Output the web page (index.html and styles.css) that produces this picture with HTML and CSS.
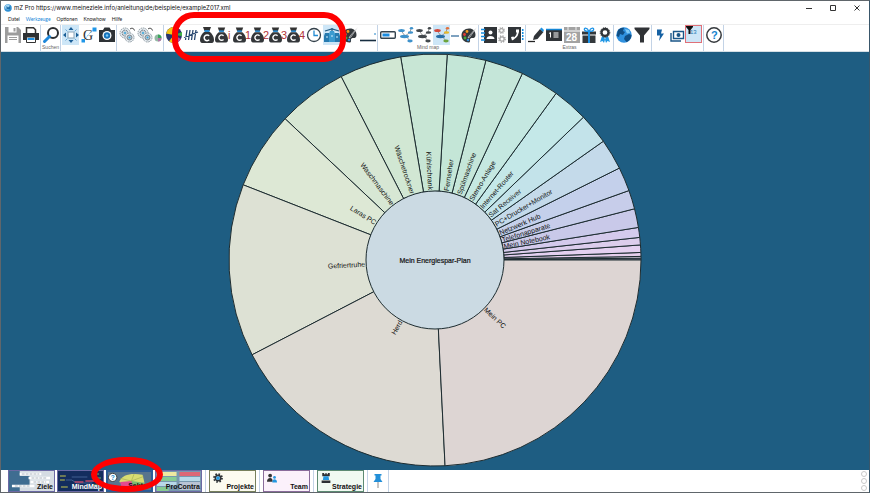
FILE: index.html
```html
<!DOCTYPE html>
<html lang="de">
<head>
  <meta charset="UTF-8">
  <title>mZ Pro</title>
  <meta name="viewport" content="width=device-width, initial-scale=1.0">
  <link rel="stylesheet" href="styles.css">
</head>
<body>

<!-- Shared icon shapes -->
<svg class="defs" aria-hidden="true">
  <symbol id="bag" viewBox="0 0 14 16">
    <path d="M3 0h8L9.500 4h-5z" fill="#333"/>
    <path d="M4.500 3h5v2h-5z" fill="#2a8bd0"/>
    <path d="M4 5h6c2.500 2 4 5 4 8 0 2-1 3-2 3H2c-1 0-2-1-2-3 0-3 1.500-6 4-8z" fill="#333639"/>
    <path d="M9.200 8.800a2.900 2.900 0 1 0 0 4" fill="none" stroke="#fff" stroke-width="1.500"/>
  </symbol>
  <symbol id="palette" viewBox="0 0 16 16">
    <path d="M8 1.500C3.500 1.500.5 4.500.5 8.500s3 7 7 7c2 0 1.500-2 1.500-3s1-1.500 2.500-1.500 3-.5 3-3c0-4-2.500-6.500-6.500-6.500z" fill="#33383c"/>
    <circle cx="6" cy="4.500" r="1.400" fill="#f59a20"/>
    <circle cx="3.500" cy="7.500" r="1.400" fill="#e23b32"/>
    <circle cx="4" cy="11" r="1.400" fill="#47a53c"/>
    <circle cx="7" cy="13" r="1.300" fill="#2e8fdb"/>
    <path d="M15.500.5L8 9l-1 2 2-1z" fill="#4a4f53" stroke="#fff" stroke-width=".5"/>
  </symbol>
  <symbol id="gear" viewBox="0 0 16 16">
    <circle cx="8" cy="8" r="6.300" fill="none" stroke="currentColor" stroke-width="3" stroke-dasharray="2.500 2.450"/>
    <circle cx="8" cy="8" r="4.300" fill="none" stroke="currentColor" stroke-width="2.600"/>
  </symbol>
  <symbol id="gears" viewBox="0 0 16 16">
    <circle cx="6" cy="6" r="5" fill="#e8eef2" stroke="#8b979f" stroke-dasharray="1.500 .8"/>
    <circle cx="6" cy="6" r="3" fill="#c5d0d8" stroke="#59656e" stroke-width=".8" stroke-dasharray="2 1"/>
    <circle cx="6" cy="6" r="1" fill="#35aae2"/>
    <circle cx="10.500" cy="10.500" r="4.500" fill="#e8eef2" stroke="#8b979f" stroke-dasharray="1.500 .8"/>
    <circle cx="10.500" cy="10.500" r="2.500" fill="#b9c6cf" stroke="#66737d" stroke-width=".8"/>
    <circle cx="10.500" cy="10.500" r="1" fill="#35aae2"/>
    <path d="M11 2c2-1.500 4-.5 4.500 1.500" fill="none" stroke="#333"/>
  </symbol>
  <symbol id="gift" viewBox="0 0 14 16">
    <path d="M0 4.500h6v3H0zM8 4.500h6v3H8zM.5 8.500H6V16H.5zM8 8.500h5.500V16H8z" fill="#33383c"/>
    <path d="M6 4.500h2V16H6z" fill="#1e93e6"/>
    <path d="M7 4.500C5 0 1.500.5 2.500 3c.5 1.500 3 1.500 4.500 1.500C9 0 12.500.5 11.500 3c-.5 1.500-3 1.500-4.500 1.500z" fill="none" stroke="#1e93e6" stroke-width="1.300"/>
  </symbol>
  <symbol id="map" viewBox="0 0 16 16">
    <path d="M3 3.500l4 5.500 5-3.500M8 9l4 5M13 1.500l-1 4" fill="none" stroke="#777" stroke-width=".7"/>
    <ellipse class="n1" cx="3.500" cy="3.500" rx="3.300" ry="1.500"/>
    <ellipse class="n2" cx="13.500" cy="1.300" rx="1.700" ry="1.200"/>
    <ellipse class="n3" cx="12.500" cy="5.500" rx="2.700" ry="1.300"/>
    <ellipse class="n4" cx="6.500" cy="9.500" rx="4.500" ry="1.700"/>
    <ellipse class="n5" cx="12" cy="14" rx="2.700" ry="1.400"/>
  </symbol>
</svg>

<header>
  <div class="titlebar">
    <svg class="logo" viewBox="0 0 16 16"><circle cx="8" cy="8" r="7.500" fill="#2f8fd3"/><circle cx="7" cy="6" r="5" fill="#9fd3f2"/><path d="M5 4l3 3 4-3v6H5z" fill="#1c6da9"/></svg>
    <span class="title">mZ Pro https://www.meineziele.info/anleitung/de/beispiele/exampleZ017.xml</span>
    <button class="win" aria-label="Minimieren"><svg viewBox="0 0 6 6"><path d="M0 3.500h6"/></svg></button>
    <button class="win" aria-label="Maximieren"><svg viewBox="0 0 6 6"><path d="M.5.5h5v5h-5z"/></svg></button>
    <button class="win" aria-label="Schließen"><svg viewBox="0 0 6 6"><path d="M.5.5l5 5M5.500.5l-5 5"/></svg></button>
  </div>

  <nav class="menu">
    <button>Datei</button>
    <button class="current">Werkzeuge</button>
    <button>Optionen</button>
    <button>Knowhow</button>
    <button>Hilfe</button>
  </nav>

  <div class="ribbon">
    <div class="group">
      <div class="icons">
        <button aria-label="Speichern"><svg viewBox="0 0 16 16"><path d="M0 0h13l3 3v13H0z" fill="#9c9c9c"/><path d="M3.500 0h8v5.500h-8z" fill="#fff"/><path d="M8.500 1h2v3.500h-2z" fill="#9c9c9c"/><path d="M2.500 8.500h11V16h-11z" fill="#fff"/><path d="M4 10.500h8M4 12.500h8" stroke="#9c9c9c"/></svg></button>
        <button aria-label="Drucken"><svg viewBox="0 0 16 16"><path d="M3.500 6V.8h7l2 2V6" fill="#fff" stroke="#333" stroke-width="1.500"/><path d="M0 6h16v7H0z" fill="#2d3033"/><path d="M3.500 10h9v5.500h-9z" fill="#fff" stroke="#333"/><path d="M4.500 11h7v2h-7z" fill="#1d91e5"/></svg></button>
      </div>
    </div>

    <div class="group">
      <div class="icons">
        <button aria-label="Suchen"><svg viewBox="0 0 16 16"><circle cx="10" cy="6" r="5" fill="#fff" stroke="#2b2e31" stroke-width="2"/><path d="M6.500 9.500L1.500 14.500" stroke="#1e87da" stroke-width="3" stroke-linecap="round"/></svg></button>
      </div>
      <span class="caption">Suchen</span>
    </div>

    <div class="group">
      <div class="icons">
        <button class="active" aria-label="Verschieben"><svg viewBox="0 0 16 16"><path d="M5 5h6v6H5z" fill="#fff" stroke="#8aa5b8"/><path d="M8 0l2.500 3h-5zM8 16l2.500-3h-5zM0 8l3-2.500v5zM16 8l-3-2.500v5z" fill="#1b5f97"/><path d="M2.500 2.500l2 2M13.500 2.500l-2 2M2.500 13.500l2-2M13.500 13.500l-2-2" stroke="#6aa9d4"/></svg></button>
        <button aria-label="Gruppe"><svg viewBox="0 0 16 16"><path d="M11.500.5h4v4h-4zM.5 12h3.500v3.500H.5z" fill="#2197e8"/><path d="M11 3.500L4 12" stroke="#2197e8" stroke-dasharray="1 1"/><text class="serif" x="2" y="13">G</text></svg></button>
        <button aria-label="Foto"><svg viewBox="0 0 16 16"><path d="M0 3h4l1.500-2.500h5L12 3h4v12H0z" fill="#2e3236"/><circle cx="8" cy="8.500" r="4.500" fill="#fff"/><circle cx="8" cy="8.500" r="3.200" fill="#1875bd"/><circle cx="8" cy="8.500" r="1.200" fill="#7cc8f6"/></svg></button>
      </div>
    </div>

    <div class="group">
      <div class="icons">
        <button aria-label="Ablauf"><svg><use href="#gears"/></svg></button>
        <button aria-label="Ablauf umkehren"><svg><use href="#gears"/></svg></button>
        <button class="mini" aria-label="Farbkreis"><svg viewBox="0 0 8 16"><circle cx="4" cy="11" r="3.500" fill="#93b9a4"/><path d="M4 11V7.500A3.500 3.500 0 0 1 7.500 11z" fill="#39a65a"/><path d="M4 11h3.500A3.500 3.500 0 0 1 4 14.500z" fill="#b174a8"/></svg></button>
      </div>
    </div>

    <div class="group">
      <div class="icons">
        <button aria-label="Farben"><svg viewBox="0 0 16 16"><circle cx="8" cy="8" r="8" fill="#27356e"/><path d="M8 8L0 6.500A8 8 0 0 1 11 .6zM8 8l-5 6.200A8 8 0 0 0 9 16z" fill="#f3c515"/><path d="M8 8l8-3v4z" fill="#3fb245"/><path d="M8 8l7 4a8 8 0 0 1-6 4z" fill="#b94c9d"/></svg></button>
        <button class="narrow" aria-label="Strichliste"><svg viewBox="0 0 14 16"><path d="M3 3L1.500 13M6 3L4.500 13M9 3L7.500 13M12 3l-1.500 10M0 10.500L14 5" stroke="#27466f" stroke-width="1.300"/></svg></button>
        <button class="narrow" aria-label="Kosten"><svg><use href="#bag"/></svg></button>
        <button aria-label="Kosten Info"><svg viewBox="0 0 16 16"><use href="#bag" x="-1" width="13" height="16"/><text class="num" x="12" y="12">i</text></svg></button>
        <button aria-label="Kosten 1"><svg viewBox="0 0 16 16"><use href="#bag" x="-1" width="13" height="16"/><text class="num" x="11" y="12">1</text></svg></button>
        <button aria-label="Kosten 2"><svg viewBox="0 0 16 16"><use href="#bag" x="-1" width="13" height="16"/><text class="num" x="11" y="12">2</text></svg></button>
        <button aria-label="Kosten 3"><svg viewBox="0 0 16 16"><use href="#bag" x="-1" width="13" height="16"/><text class="num" x="11" y="12">3</text></svg></button>
        <button aria-label="Kosten 4"><svg viewBox="0 0 16 16"><use href="#bag" x="-1" width="13" height="16"/><text class="num" x="11" y="12">4</text></svg></button>
        <button aria-label="Zeit"><svg viewBox="0 0 16 16"><circle cx="8" cy="8" r="6.500" fill="#fff" stroke="#34414b" stroke-width="1.300"/><path d="M8 3.500V8.500h4" fill="none" stroke="#238bd3" stroke-width="1.300"/></svg></button>
        <button class="active" aria-label="Waage"><svg viewBox="0 0 16 16"><path d="M8 1v14M1 4l7-2 7 2" stroke="#245d84" stroke-width="1.300" fill="none"/><path d="M1 6h4l1 3v6H0V9zM11 6h4l1 3v6h-6V9z" fill="#267aaf"/><path d="M6 4h4l1 3v8H5V7z" fill="#3b9bd0"/><path d="M2 10h2M7 9h2M12 10h2" stroke="#d3efff"/></svg></button>
        <button aria-label="Farbe"><svg><use href="#palette"/></svg></button>
        <button aria-label="Linie"><svg viewBox="0 0 16 16"><path d="M0 13.500h16" stroke="#172d40" stroke-width="1.600"/><path d="M15 6v2" stroke="#1e83c7"/></svg></button>
      </div>
    </div>

    <div class="group">
      <div class="icons">
        <button aria-label="Fortschritt"><svg viewBox="0 0 16 16"><rect x=".7" y="4.700" width="14.600" height="6.600" rx="1" fill="#fff" stroke="#34434e" stroke-width="1.400"/><path d="M2.500 6.500h7v3h-7z" fill="#198be0"/></svg></button>
        <button aria-label="Karte blau"><svg class="blue"><use href="#map"/></svg></button>
        <button aria-label="Karte grau"><svg class="dark"><use href="#map"/></svg></button>
        <button class="active" aria-label="Karte bunt"><svg class="multi"><use href="#map"/></svg></button>
        <button class="mini" aria-label="Verbindung"><svg viewBox="0 0 8 16"><path d="M0 9h8" stroke="#5383ab" stroke-width="1.500"/></svg></button>
        <button aria-label="Kartenfarben"><svg><use href="#palette"/></svg></button>
      </div>
      <span class="caption">Mind map</span>
    </div>

    <div class="group">
      <div class="icons">
        <button aria-label="Kontakte"><svg viewBox="0 0 16 16"><path d="M3 0h13v16H3z" fill="#303438"/><path d="M0 2.500h4M0 6h4M0 9.500h4M0 13h4" stroke="#178fe1" stroke-width="1.600"/><circle cx="9.500" cy="5.500" r="2" fill="#fff"/><path d="M5.500 12c0-4 8-4 8 0z" fill="#fff"/></svg></button>
        <button class="mini" aria-label="Einstellungen"><svg class="grey" viewBox="0 0 8 16"><use href="#gear" width="7" height="7"/><use href="#gear" y="8" width="8" height="8"/></svg></button>
        <button aria-label="Telefon"><svg viewBox="0 0 16 16"><path d="M0 0h13v16H0z" fill="#303438"/><path d="M14 3h1.500M14 6h1.500M14 9h1.500M14 12h1.500" stroke="#178fe1" stroke-width="2"/><path d="M9.500 3c1 4-1 8-5.500 9" fill="none" stroke="#fff" stroke-width="1.800"/><path d="M8 2.500h3v3H8zM3 10l2.500-.5 1 2.500L4 13.500z" fill="#fff"/></svg></button>
      </div>
    </div>

    <div class="group">
      <div class="icons">
        <button aria-label="Stift"><svg viewBox="0 0 16 16"><path d="M0 14.500h7" stroke="#222" stroke-width="1.300"/><path d="M5 13l1-4 6-7 3.500 3-6 7z" fill="#303438"/><path d="M12 2l1.500-1.500L16 3l-1 2z" fill="#1d92e4"/></svg></button>
        <button aria-label="Karteikarte"><svg viewBox="0 0 16 16"><path d="M0 2h16v12H0z" fill="#303438"/><path d="M0 2.500h16" stroke="#1586d5" stroke-width="1.500"/><path d="M4.500 5.500v5M3 6.500l1.500-1M7.500 6h5M7.500 8h5M7.500 10h5" stroke="#fff"/></svg></button>
        <button aria-label="Kalender"><svg viewBox="0 0 16 16"><path d="M0 0h16v16H0z" fill="#a3a3a3"/><path d="M0 4h16" stroke="#fff"/><path d="M4 0v3M12 0v3" stroke="#ddd" stroke-width="1.300"/><text class="day" x="2" y="14">28</text></svg></button>
        <button class="narrow" aria-label="Geschenk"><svg><use href="#gift"/></svg></button>
        <button class="narrow" aria-label="Auszeichnung"><svg viewBox="0 0 14 16"><path d="M4 9l-2 6 2.500-1L6 16l1.500-5zM10 9l2 6-2.500-1L8 16l-1.500-5z" fill="#2097e4"/><circle cx="7" cy="5.500" r="3.500" fill="#fff" stroke="#303438" stroke-width="2.300"/><circle cx="7" cy="5.500" r="4.800" fill="none" stroke="#303438" stroke-dasharray="1.200 1"/></svg></button>
      </div>
      <span class="caption">Extras</span>
    </div>

    <div class="group">
      <div class="icons">
        <button aria-label="Internet"><svg viewBox="0 0 16 16"><circle cx="8" cy="8" r="7.700" fill="#2f91df"/><path d="M2 3c2-2 5-2.500 6-2l-1 3 2 1-2 3-3-1-1 3-2.500-1zM9 9l4-2 2.500 1c0 4-3 6.500-5 7L8 12z" fill="#104e84"/><path d="M9 2l4 1 1 3-3 .5z" fill="#80cbf7"/></svg></button>
        <button aria-label="Filter"><svg viewBox="0 0 16 16"><path d="M.5.5h15v1.500L10 8.500v7H6v-7L.5 2z" fill="#303336"/></svg></button>
      </div>
    </div>

    <div class="group">
      <div class="icons">
        <button class="narrow" aria-label="Blitz"><svg viewBox="0 0 14 16"><path d="M3 2.500h5L7 6.500h3L5 14l1-5.500H3z" fill="#1561a3"/></svg></button>
        <button class="narrow" aria-label="Geld"><svg viewBox="0 0 14 16"><path d="M3.500 4.500h10v7h-10z" fill="#fff" stroke="#1a5688" stroke-width="1.400"/><circle cx="8.500" cy="8" r="2" fill="#1a5688"/><path d="M1 6v8h10" fill="none" stroke="#1a5688" stroke-width="1.400"/></svg></button>
        <button class="active framed" aria-label="Filter 13"><svg viewBox="0 0 16 16"><path d="M0 0h7v1L4.500 4v4h-2V4L0 1z" fill="#111"/><text class="small" x="4" y="8">13</text></svg></button>
      </div>
    </div>

    <div class="group">
      <div class="icons">
        <button aria-label="Hilfe"><svg viewBox="0 0 16 16"><circle cx="8" cy="8" r="7.200" fill="#fff" stroke="#35393d" stroke-width="1.500"/><text class="help" x="5" y="12">?</text></svg></button>
      </div>
    </div>
  </div>
</header>

<main>
  <svg id="sunburst" viewBox="-209 -208 418 418" role="img" aria-label="Mein Energiespar-Plan"></svg>
</main>

<footer>
  <div class="views">
    <button class="view">
      <svg class="thumb" viewBox="0 0 46 20" preserveAspectRatio="none"><path d="M0 0h46v20H0z" fill="#d5dce3"/><path d="M0 0h11v20H0zM11 5h10v9H11z" fill="#3f6d91"/><path d="M11 3h22M20 7h22M22 11h19M3 15h23" stroke="#fff" stroke-width="2.500"/><path d="M13 3h18M23 7h15M25 11h13M6 15h16" stroke="#8795a4" stroke-width=".7" stroke-dasharray="3 1"/></svg>
      <span>Ziele</span>
    </button>
    <button class="view light">
      <svg class="thumb" viewBox="0 0 46 20" preserveAspectRatio="none"><path d="M0 0h46v20H0z" fill="#132d5e"/><path d="M2 5h6M2 9h5M3 16h7" stroke="#c7c84e"/><path d="M8 9h6l5 3h16M14 6h16" fill="none" stroke="#5f83b4" stroke-width=".6"/><path d="M17 11h9M28 10h9" stroke="#bc486c" stroke-width="1.300"/><path d="M35 3h7M38 7h6M36 14h7" stroke="#79b65f"/></svg>
      <span>MindMap</span>
    </button>
    <button class="view selected">
      <svg class="thumb" viewBox="0 0 46 20" preserveAspectRatio="none"><path d="M0 0h46v20H0z" fill="#58748d"/><path d="M12 11C15 3 24 1 37 3l2 9-18 3z" fill="#d9dc72"/><path d="M13 11l12-1 7 10H15z" fill="#e24c90"/><path d="M25 10l14 2v8H28z" fill="#7dba70"/><path d="M13 7l12 3 3-8M25 10l13-5" fill="none" stroke="#98a54b" stroke-width=".6"/><circle cx="5" cy="6" r="4.500" fill="#fff" stroke="#333"/><text class="q" x="3" y="9">?</text></svg>
      <span>Sektor</span>
    </button>
    <button class="view">
      <svg class="thumb" viewBox="0 0 46 20" preserveAspectRatio="none"><path d="M0 0h46v20H0z" fill="#7898af"/><path d="M1 1h20v4H1z" fill="#efe8a0"/><path d="M24 1h21v4H24z" fill="#dc6775"/><path d="M1 6h20v4H1zM1 16h12v4H1z" fill="#87cb93"/><path d="M24 6h21v4H24zM1 11h20v4H1z" fill="#b8d9e8"/><path d="M24 11h21v8H24z" fill="#b9c3d4"/></svg>
      <span>ProContra</span>
    </button>
  </div>
  <div class="views">
    <button class="view projects">
      <svg class="glyph" viewBox="0 0 16 16"><use href="#gear" width="16" height="16"/><circle cx="8" cy="8" r="3" fill="#269be2"/></svg>
      <span>Projekte</span>
    </button>
  </div>
  <div class="views">
    <button class="view team">
      <svg class="glyph" viewBox="0 0 16 16"><circle cx="5" cy="4" r="3" fill="#333"/><path d="M0 14c0-4 2-6 5-6s4 2 4 6z" fill="#333"/><circle cx="12" cy="7" r="2.200" fill="#2397e0"/><path d="M8.500 15c0-3.500 1.500-5 3.500-5s4 1.500 4 5z" fill="#2397e0"/></svg>
      <span>Team</span>
    </button>
  </div>
  <div class="views">
    <button class="view strategy">
      <svg class="glyph" viewBox="0 0 16 16"><path d="M2 0h3v2h2V0h2v2h2V0h3v5H2z" fill="#2c3033"/><path d="M4 5h8l1 6H3z" fill="#2397e0"/><path d="M1 12h14v4H1z" fill="#2c3033"/></svg>
      <span>Strategie</span>
    </button>
  </div>
  <div class="views">
    <button class="pin" aria-label="Anheften"><svg viewBox="0 0 10 16"><path d="M1.500 1h7v1.500h-1V6L9.500 9h-9l2-3V2.500h-1z" fill="#238fd8"/><path d="M5 9v6" stroke="#888"/></svg></button>
  </div>
  <div class="dots">
    <button aria-label="Ansicht 1"></button>
    <button aria-label="Ansicht 2"></button>
    <button aria-label="Ansicht 3"></button>
  </div>
</footer>

<!-- Red markers laid over the toolbar and the sector tab -->
<div class="marker marker-tools"></div>
<div class="marker marker-tab"></div>

<script>
// start = angle in degrees, counter-clockwise from 3 o'clock
const sectors = [
  {start: 0,     name: '',                   color: '#9a8da6'},
  {start: 0.5,   name: '',                   color: '#d9cde0'},
  {start: 1,     name: '',                   color: '#e6cfec'},
  {start: 2.1,   name: '',                   color: '#e4d0f0'},
  {start: 4.2,   name: '',                   color: '#dccdec'},
  {start: 6.3,   name: '',                   color: '#d4caec'},
  {start: 9.1,   name: 'Mein Notebook',      color: '#c9c9e9'},
  {start: 14.4,  name: 'Telefonapparate',    color: '#c7cdea'},
  {start: 19.7,  name: 'Netzwerk Hub',       color: '#c4d0eb'},
  {start: 26.5,  name: 'PC+Drucker+Monitor', color: '#c4daea'},
  {start: 35.2,  name: 'Sat Receiver',       color: '#c3e3ea'},
  {start: 43.9,  name: 'Internet-Router',    color: '#c4e8e8'},
  {start: 54,    name: 'Stereo-Anlage',      color: '#c5e8e1'},
  {start: 64.9,  name: 'Spülmaschine',       color: '#c5e6d9'},
  {start: 75.7,  name: 'Fernseher',          color: '#c4e6d7'},
  {start: 86.6,  name: 'Kühlschrank',        color: '#c8e6d5'},
  {start: 99.6,  name: 'Wäschetrockner',     color: '#d1e7d3'},
  {start: 117.1, name: 'Waschmaschine',      color: '#d7e7d4'},
  {start: 136.7, name: 'Laras PC',           color: '#dde8d5'},
  {start: 158.6, name: 'Gefriertruhe',       color: '#dde1d4'},
  {start: 207.4, name: 'Herd',               color: '#dddad3'},
  {start: 272.8, name: 'Mein PC',            color: '#ddd5d3'}
];
const OUTER = 206;
const INNER = 69;
const svg = document.getElementById('sunburst');

function add(tag, attrs, text) {
  const el = document.createElementNS('http://www.w3.org/2000/svg', tag);
  for (const key in attrs) el.setAttribute(key, attrs[key]);
  if (text) el.textContent = text;
  svg.appendChild(el);
}
function point(r, deg) {
  const a = deg * Math.PI / 180;
  return (r * Math.cos(a)).toFixed(2) + ' ' + (-r * Math.sin(a)).toFixed(2);
}

sectors.forEach((s, i) => {
  const end = i + 1 < sectors.length ? sectors[i + 1].start : 360;
  const big = end - s.start > 180 ? 1 : 0;
  add('path', {
    class: 'sector',
    fill: s.color,
    d: `M${point(INNER, s.start)} L${point(OUTER, s.start)} A${OUTER} ${OUTER} 0 ${big} 0 ${point(OUTER, end)} L${point(INNER, end)} Z`
  });
});

add('circle', {class: 'hub', r: INNER});
add('text', {class: 'hub-label', 'text-anchor': 'middle', y: 3}, 'Mein Energiespar-Plan');

// Labels start at the hub and stay readable on the left half
sectors.forEach((s, i) => {
  if (!s.name) return;
  const end = i + 1 < sectors.length ? sectors[i + 1].start : 360;
  const mid = (s.start + end) / 2;
  const left = mid > 90 && mid < 270;
  add('text', {
    class: 'label',
    x: left ? -INNER - 1 : INNER + 1,
    y: 3,
    'text-anchor': left ? 'end' : 'start',
    transform: `rotate(${left ? 180 - mid : -mid})`
  }, s.name);
});
</script>
</body>
</html>
```

FILE: styles.css
```css
* {
  box-sizing: border-box;
}
body {
  margin: 0;
  height: 100vh;
  display: flex;
  flex-direction: column;
  position: relative;
  overflow: hidden;
  background: #1e5d82;
  border: 1px solid #60666b;
  border-right-color: #39566a;
  font-family: "Liberation Sans", Arial, sans-serif;
}
button {
  margin: 0;
  padding: 0;
  border: 0;
  background: none;
  font-family: inherit;
  color: inherit;
}
svg {
  display: block;
}
.defs {
  position: absolute;
  width: 0;
  height: 0;
}

/* Title and menu */
header {
  background: #fff;
}
.titlebar {
  display: flex;
  align-items: center;
  height: 14px;
  padding-left: 3px;
}
.logo {
  width: 8px;
  height: 8px;
}
.title {
  flex: 1;
  padding-left: 2px;
  font-family: Inter, sans-serif;
  font-size: 6px;
  line-height: 14px;
  color: #111;
}
.win {
  width: 24px;
  height: 14px;
  display: flex;
  align-items: center;
  justify-content: center;
}
.win svg {
  width: 6px;
  height: 6px;
  fill: none;
  stroke: #333;
  stroke-width: 1;
}
.menu {
  display: flex;
  gap: 6px;
  height: 9px;
  padding-left: 7px;
}
.menu button {
  font-family: Lato, sans-serif;
  font-size: 5px;
  line-height: 9px;
  color: #222;
}
.menu .current {
  color: #1686d9;
}

/* Toolbar */
.ribbon {
  display: flex;
  height: 28px;
  padding: 0 2px;
  border-top: 1px solid #eee;
  border-bottom: 1px solid #d5dfe5;
}
.group {
  display: flex;
  flex-direction: column;
  align-items: center;
  padding: 0 1px;
  border-right: 1px solid #c3d3e6;
}
.icons {
  display: flex;
  gap: 1px;
}
.icons button {
  width: 17px;
  height: 20px;
  display: flex;
  align-items: center;
  justify-content: center;
}
.icons .narrow {
  width: 15px;
}
.icons .mini {
  width: 8px;
}
.icons svg {
  width: 16px;
  height: 16px;
  overflow: visible;
}
.icons .narrow svg {
  width: 14px;
}
.icons .mini svg {
  width: 8px;
}
.icons .active {
  background: #cde6f7;
}
.icons .framed {
  height: 18px;
  border: 1px solid #e07078;
}
.caption {
  font-size: 5px;
  line-height: 5px;
  color: #666;
}
.serif {
  font: 14px "Liberation Serif", serif;
  fill: #333;
}
.num {
  font: 11px "Liberation Sans", sans-serif;
  fill: #b0343a;
}
.day {
  font: bold 10px "Liberation Sans", sans-serif;
  fill: #fff;
}
.small {
  font: 6px "Liberation Sans", sans-serif;
  fill: #267bb5;
}
.help {
  font: bold 11px "Liberation Sans", sans-serif;
  fill: #1684ce;
}
.grey {
  color: #a5a5a5;
}
.blue {
  fill: #3f92cb;
}
.dark {
  fill: #42484d;
}
.multi {
  --n1: #d4493b;
  --n2: #e2703b;
  --n3: #e5b82b;
  --n4: #266fa8;
  --n5: #6ca43d;
}
.n1 { fill: var(--n1, inherit); }
.n2 { fill: var(--n2, inherit); }
.n3 { fill: var(--n3, inherit); }
.n4 { fill: var(--n4, inherit); }
.n5 { fill: var(--n5, inherit); }

/* Chart */
main {
  flex: 1;
  min-height: 0;
  display: flex;
  justify-content: center;
}
#sunburst {
  width: 100%;
  height: 100%;
}
.sector {
  stroke: #1d2c30;
  stroke-width: 1;
}
.hub {
  fill: #cbdae3;
  stroke: #1d2c30;
}
.label, .hub-label {
  font-size: 7px;
  fill: #111;
}
.hub-label {
  stroke: #111;
  stroke-width: 0.2;
}

/* View tabs */
footer {
  display: flex;
  height: 22px;
  padding-left: 4px;
  background: #fff;
}
.views {
  display: flex;
  gap: 2px;
  padding: 0 3px;
  border-right: 1px solid #c3d3e6;
}
.view {
  position: relative;
  width: 47px;
  height: 22px;
  display: flex;
  align-items: flex-end;
  justify-content: flex-end;
  border: 1px solid #6b69a4;
  padding: 0 1px;
  color: #111;
}
.view span {
  position: relative;
  font-size: 7px;
  font-weight: bold;
  line-height: 8px;
}
.view.light {
  color: #fff;
}
.view.selected {
  border: 2px solid #2c5c96;
}
.thumb {
  position: absolute;
  top: 0;
  left: 0;
  width: 100%;
  height: 100%;
}
.glyph {
  position: absolute;
  top: 2px;
  left: 3px;
  width: 10px;
  height: 10px;
  color: #303438;
}
.projects {
  background: #fcfbf0;
  border-color: #77805c;
}
.team {
  background: #fbf1fb;
  border-color: #8a6c9b;
}
.strategy {
  background: #f1faf2;
  border-color: #5d8b73;
}
.q {
  font-size: 7px;
  font-weight: bold;
  fill: #1785ce;
}
.pin {
  width: 14px;
  display: flex;
  align-items: center;
  justify-content: center;
}
.pin svg {
  width: 10px;
  height: 16px;
}
.dots {
  margin-left: auto;
  padding: 1px 2px;
  display: flex;
  flex-direction: column;
  justify-content: space-between;
}
.dots button {
  width: 6px;
  height: 6px;
  border: 1px solid #c9c9c9;
  border-radius: 50%;
}

/* Markers */
.marker {
  position: absolute;
  border: 6px solid #fe0000;
  pointer-events: none;
}
.marker-tools {
  left: 171px;
  top: 11px;
  width: 174px;
  height: 50px;
  border-radius: 22px;
}
.marker-tab {
  left: 90px;
  bottom: 0;
  width: 72px;
  height: 35px;
  border-radius: 36px / 18px;
}
```
